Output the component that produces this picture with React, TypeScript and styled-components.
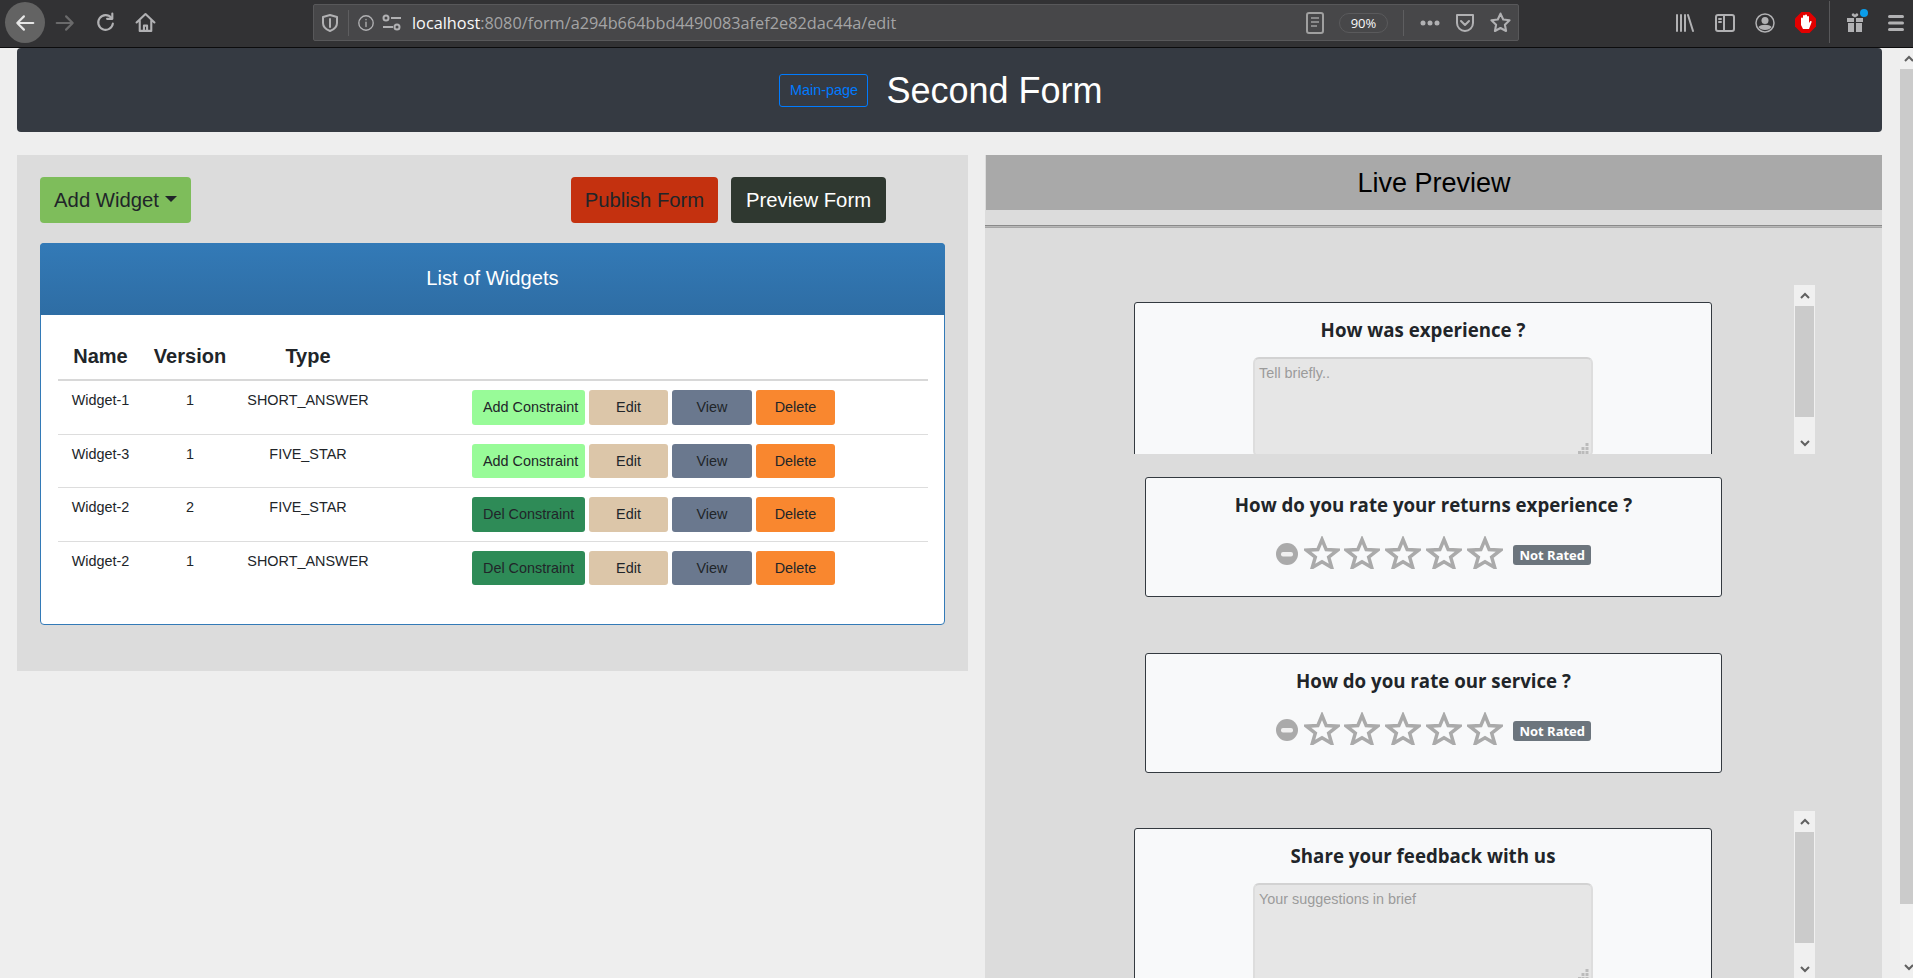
import React from "react";
import styled, { createGlobalStyle } from "styled-components";

const GlobalStyle = createGlobalStyle`
  html, body {
    margin: 0;
    padding: 0;
    height: 100%;
    overflow: hidden;
    background: #eeeeee;
    font-family: "Liberation Sans", Arial, sans-serif;
    color: #212529;
  }
  * {
    box-sizing: border-box;
  }
`;

const Shell = styled.div`
  width: 1913px;
  height: 978px;
  overflow: hidden;
  display: flex;
  flex-direction: column;
`;

/* browser chrome */
const BrowserBar = styled.header`
  flex: none;
  height: 48px;
  background: #323234;
  border-bottom: 1px solid #0c0c0d;
  display: flex;
  align-items: flex-start;
  padding-left: 5px;
`;

const NavButton = styled.div<{ $active?: boolean }>`
  flex: none;
  width: 40px;
  height: 41px;
  margin-top: 2px;
  border-radius: 50%;
  display: flex;
  align-items: center;
  justify-content: center;
  background: ${(p) => (p.$active ? "#636363" : "transparent")};
`;

const UrlBar = styled.div`
  flex: none;
  width: 1206px;
  height: 37px;
  margin: 4px 0 0 148px;
  background: #474749;
  border: 1px solid #58585a;
  border-radius: 2px;
  display: flex;
  align-items: center;
  padding: 0 7px 0 6px;
`;

const UrlDivider = styled.span<{ $left: number; $right: number }>`
  width: 1px;
  height: 26px;
  background: #5e5e60;
  margin: 0 ${(p) => p.$right}px 0 ${(p) => p.$left}px;
`;

const UrlText = styled.div`
  margin-left: 10px;
  font-family: "Open Sans", sans-serif;
  font-size: 16.3px;
  color: #a4a4a5;
  white-space: nowrap;
`;

const UrlHost = styled.span`
  color: #f9f9fa;
`;

const UrlTools = styled.div`
  margin-left: auto;
  display: flex;
  align-items: center;
`;

const ZoomPill = styled.div`
  width: 49px;
  height: 20px;
  margin: 0 15px 0 15px;
  border: 1px solid #5a5a5c;
  border-radius: 10px;
  font-family: "Open Sans", sans-serif;
  font-size: 13px;
  line-height: 18px;
  text-align: center;
  color: #f9f9fa;
`;

const ToolRow = styled.div`
  flex: none;
  display: flex;
  align-items: flex-start;
  margin-left: 146px;
`;

const ToolButton = styled.div`
  width: 40px;
  height: 41px;
  margin-top: 2px;
  display: flex;
  align-items: center;
  justify-content: center;
`;

const ToolDivider = styled.span`
  width: 1px;
  height: 42px;
  margin: 1px 6px 0 4px;
  background: #58585a;
`;

/* page */
const Viewport = styled.div`
  flex: 1;
  display: flex;
  min-height: 0;
`;

const Page = styled.main`
  flex: none;
  width: 1900px;
  padding: 0 18px 0 17px;
  overflow: hidden;
`;

const NavBar = styled.nav`
  height: 84px;
  background: #353a42;
  border-radius: 4px;
  display: flex;
  align-items: center;
  justify-content: center;
  gap: 18px;
  padding-right: 17px;
`;

const MainLink = styled.a`
  width: 89px;
  height: 33px;
  border: 1px solid #007bff;
  border-radius: 3px;
  color: #007bff;
  font-size: 14.4px;
  line-height: 31px;
  text-align: center;
`;

const PageTitle = styled.h1`
  margin: 2px 0 0;
  font-size: 36px;
  font-weight: 400;
  color: #ffffff;
`;

const Columns = styled.div`
  margin-top: 23px;
  display: flex;
  align-items: flex-start;
  gap: 17px;
`;

const LeftPanel = styled.section`
  width: 951px;
  height: 516px;
  background: #dcdcdc;
  padding: 22px 23px;
`;

const ActionRow = styled.div`
  display: flex;
  gap: 13px;
`;

const BigButton = styled.button<{ $bg: string; $fg: string; $width: number; $push?: number }>`
  width: ${(p) => p.$width}px;
  height: 46px;
  padding: 0;
  border: 0;
  border-radius: 4px;
  background: ${(p) => p.$bg};
  color: ${(p) => p.$fg};
  font-family: inherit;
  font-size: 20.3px;
  margin-left: ${(p) => p.$push ?? 0}px;
  display: flex;
  align-items: center;
  justify-content: center;
  white-space: nowrap;
`;

const Caret = styled.span`
  width: 0;
  height: 0;
  margin-left: 6px;
  margin-bottom: 3px;
  border-top: 6px solid #212529;
  border-left: 6px solid transparent;
  border-right: 6px solid transparent;
`;

const WidgetCard = styled.div`
  margin-top: 20px;
  width: 905px;
  height: 382px;
  background: #ffffff;
  border: 1px solid #337ab7;
  border-radius: 4px;
`;

const WidgetHeader = styled.div`
  height: 72px;
  margin: -1px -1px 0;
  border-radius: 4px 4px 0 0;
  background: linear-gradient(#337ab7, #2e6da4);
  color: #ffffff;
  font-size: 20.2px;
  line-height: 70px;
  text-align: center;
`;

const WidgetTable = styled.div`
  margin: 0 16px 0 17px;
`;

const HeadRow = styled.div`
  display: grid;
  grid-template-columns: 85px 94px 142px 1fr;
  height: 66px;
  padding-top: 29px;
  border-bottom: 2px solid #d8d8d8;
  font-size: 20px;
  font-weight: 700;
  line-height: 24px;
  text-align: center;
`;

const BodyRow = styled.div`
  display: grid;
  grid-template-columns: 85px 94px 142px 1fr;
  height: 53.5px;
  border-bottom: 1px solid #dddddd;
  font-size: 14.4px;
  line-height: 21.6px;
  text-align: center;
  &:last-child {
    border-bottom: 0;
  }
`;

const Cell = styled.div`
  padding-top: 9px;
`;

const RowActions = styled.div`
  padding: 9px 0 0 93px;
  display: flex;
  gap: 4px;
`;

const tones = {
  add: "#98fb98",
  del: "#2e8b57",
  edit: "#dcc6a9",
  view: "#6a788e",
  remove: "#f9872f",
};

const RowButton = styled.button<{ $tone: keyof typeof tones; $width: number }>`
  width: ${(p) => p.$width}px;
  height: 34.6px;
  padding: 0 0 0 ${(p) => (p.$width > 100 ? 11 : 0)}px;
  border: 0;
  border-radius: 3px;
  background: ${(p) => tones[p.$tone]};
  color: #212529;
  font-family: inherit;
  font-size: 14.4px;
  text-align: ${(p) => (p.$width > 100 ? "left" : "center")};
  white-space: nowrap;
`;

const RightPanel = styled.section`
  width: 897px;
  height: 840px;
  background: #dcdcdc;
  padding-left: 1px;
`;

const PreviewHeader = styled.div`
  height: 55px;
  padding-top: 1px;
  background: #a9a9a9;
  color: #000000;
  font-size: 27px;
  line-height: 55px;
  text-align: center;
`;

const PreviewRule = styled.hr`
  height: 3px;
  margin: 15px 0 0 -1px;
  border: 0;
  border-top: 1px solid #8a8a8a;
  border-bottom: 1px solid #a6a6a6;
  background: #b8b8b8;
`;

const ScrollFrame = styled.div<{ $top: number }>`
  margin: ${(p) => p.$top}px 0 0 148px;
  width: 681px;
  height: 169px;
  display: flex;
  justify-content: space-between;
  overflow: hidden;
`;

const FormCard = styled.div`
  flex: none;
  width: 578px;
  margin-top: 17px;
  height: 240px;
  padding-top: 15px;
  background: #f8f9fa;
  border: 1px solid #343a40;
  border-radius: 3px;
  text-align: center;
`;

const RatingCard = styled.div<{ $top: number }>`
  width: 577px;
  height: 120px;
  margin: ${(p) => p.$top}px 0 0 159px;
  padding-top: 15px;
  background: #f8f9fa;
  border: 1px solid #343a40;
  border-radius: 3px;
  text-align: center;
`;

const Question = styled.h3`
  margin: 0;
  font-family: "Open Sans", sans-serif;
  font-size: 18.7px;
  font-weight: 700;
  line-height: 24px;
  color: #212529;
`;

const AnswerWrap = styled.div`
  position: relative;
  width: 340px;
  margin: 15px auto 0;
`;

const Answer = styled.textarea`
  display: block;
  width: 340px;
  height: 100px;
  padding: 6px 4px;
  resize: none;
  border: 2px solid #dddddd;
  border-top-color: #d2d2d2;
  border-radius: 6px;
  background: #e6e6e6;
  font-family: "Liberation Sans", sans-serif;
  font-size: 14.4px;
  &::placeholder {
    color: #9b9b9b;
    opacity: 1;
  }
`;

const Grip = styled.svg`
  position: absolute;
  right: 4px;
  bottom: 3px;
`;

const StarRow = styled.div`
  display: flex;
  align-items: center;
  justify-content: center;
  margin-top: 19px;
`;

const ClearIcon = styled.svg`
  margin: 3px 6px 0 0;
`;

const StarIcon = styled.svg`
  margin-right: 4.7px;
`;

const Badge = styled.span`
  width: 78px;
  height: 20px;
  margin: 4px 0 0 6px;
  background: #6c757d;
  border-radius: 3px;
  color: #ffffff;
  font-family: "Open Sans", sans-serif;
  font-size: 13px;
  font-weight: 700;
  line-height: 20px;
  text-align: center;
`;

/* scrollbars */
const Track = styled.div<{ $width: number; $height: number }>`
  flex: none;
  width: ${(p) => p.$width}px;
  height: ${(p) => p.$height}px;
  background: #f0f0f0;
  display: flex;
  flex-direction: column;
  align-items: center;
`;

const TrackArrow = styled.div`
  flex: none;
  height: 21px;
  display: flex;
  align-items: center;
  justify-content: center;
`;

const Thumb = styled.div<{ $height: number; $inset: number }>`
  flex: none;
  align-self: stretch;
  height: ${(p) => p.$height}px;
  margin: 0 ${(p) => p.$inset}px;
  background: #cbcbcb;
`;

const TrackGap = styled.div`
  flex: 1;
`;

const Chevron = ({ down }: { down?: boolean }) => (
  <svg width="10" height="7" viewBox="0 0 10 7">
    <path
      d={down ? "M1 1l4 4 4-4" : "M1 6l4-4 4 4"}
      fill="none"
      stroke="#606060"
      strokeWidth="2"
    />
  </svg>
);

const ScrollBar = ({ width, height, thumb, inset }: { width: number; height: number; thumb: number; inset: number }) => (
  <Track $width={width} $height={height}>
    <TrackArrow>
      <Chevron />
    </TrackArrow>
    <Thumb $height={thumb} $inset={inset} />
    <TrackGap />
    <TrackArrow>
      <Chevron down />
    </TrackArrow>
  </Track>
);

/* toolbar drawings */
const stroke = "#b1b1b3";

const Glyph = ({ size = 20, color = stroke, width = 2, children }: { size?: number; color?: string; width?: number; children: React.ReactNode }) => (
  <svg width={size} height={size} viewBox="0 0 20 20" fill="none" stroke={color} strokeWidth={width} strokeLinecap="round" strokeLinejoin="round">
    {children}
  </svg>
);

const Star = () => (
  <StarIcon width="36" height="33" viewBox="0 0 36 33">
    <path
      d="M18 3.500l4.200 10.100 11.300.6-8.800 7 3 10.300-9.700-5.800-9.700 5.800 3-10.300-8.800-7 11.300-.6z"
      fill="#f8f9fa"
      stroke="#aaaaaa"
      strokeWidth="3.500"
    />
  </StarIcon>
);

const Rating = () => (
  <StarRow>
    <ClearIcon width="22" height="22" viewBox="0 0 22 22">
      <circle cx="11" cy="11" r="11" fill="#aaaaaa" />
      <rect x="5" y="9" width="12" height="4.500" rx="2" fill="#f0f0f0" />
    </ClearIcon>
    <Star />
    <Star />
    <Star />
    <Star />
    <Star />
    <Badge>Not Rated</Badge>
  </StarRow>
);

const ResizeGrip = () => (
  <Grip width="11" height="11" viewBox="0 0 11 11" fill="#bbbbbb">
    <rect x="7.500" y="0" width="3" height="3" />
    <rect x="3.500" y="4" width="3" height="3" />
    <rect x="7.500" y="4" width="3" height="3" />
    <rect x="0" y="8" width="3" height="3" />
    <rect x="3.500" y="8" width="3" height="3" />
    <rect x="7.500" y="8" width="3" height="3" />
  </Grip>
);

const rows = [
  { name: "Widget-1", version: 1, type: "SHORT_ANSWER", constrained: false },
  { name: "Widget-3", version: 1, type: "FIVE_STAR", constrained: false },
  { name: "Widget-2", version: 2, type: "FIVE_STAR", constrained: true },
  { name: "Widget-2", version: 1, type: "SHORT_ANSWER", constrained: true },
];

const App = () => {
  return (
    <Shell>
      <GlobalStyle />
      <BrowserBar>
        <NavButton $active>
          <Glyph size={22} color="#e6e6e6">
            <path d="M17.500 10H3M9 4l-6 6 6 6" />
          </Glyph>
        </NavButton>
        <NavButton>
          <Glyph size={22} color="#6a6a6b">
            <path d="M2.500 10H17M11 4l6 6-6 6" />
          </Glyph>
        </NavButton>
        <NavButton>
          <Glyph size={21}>
            <path d="M15.500 5.500A7 7 0 1 0 17 11" />
            <path d="M16.500 1.500v5h-5" />
          </Glyph>
        </NavButton>
        <NavButton>
          <Glyph size={21}>
            <path d="M1.500 10L10 2l8.500 8M4.500 8v10h11V8" />
            <path d="M8.500 18v-5h3v5" />
          </Glyph>
        </NavButton>
        <UrlBar>
          <Glyph size={20}>
            <path d="M10 2l7 2v6c0 4-3 6.500-7 8-4-1.500-7-4-7-8V4z" />
            <path d="M10 6v8" />
          </Glyph>
          <UrlDivider $left={8} $right={8} />
          <Glyph size={18} width={1.500}>
            <circle cx="10" cy="10" r="8" />
            <path d="M10 9v5M10 6v.5" />
          </Glyph>
          <svg width="20" height="18" viewBox="0 0 20 18" fill="none" stroke={stroke} strokeWidth="2" style={{ marginLeft: 7 }}>
            <circle cx="4" cy="4" r="2.500" />
            <path d="M9 4h10M1 13h10" />
            <circle cx="15" cy="13" r="2.500" />
          </svg>
          <UrlText>
            <UrlHost>localhost</UrlHost>:8080/form/a294b664bbd4490083afef2e82dac44a/edit
          </UrlText>
          <UrlTools>
            <svg width="18" height="22" viewBox="0 0 18 22" fill="none" stroke="#a0a0a0" strokeWidth="2">
              <rect x="1" y="1" width="16" height="20" rx="2" />
              <path d="M5 6h8M5 10h8M5 14h6" strokeWidth="1.500" />
            </svg>
            <ZoomPill>90%</ZoomPill>
            <UrlDivider $left={0} $right={16} />
            <svg width="20" height="6" viewBox="0 0 20 6" fill={stroke}>
              <circle cx="3" cy="3" r="2.500" />
              <circle cx="10" cy="3" r="2.500" />
              <circle cx="17" cy="3" r="2.500" />
            </svg>
            <svg width="20" height="20" viewBox="0 0 20 20" fill="none" stroke={stroke} strokeWidth="2" strokeLinecap="round" strokeLinejoin="round" style={{ marginLeft: 15 }}>
              <path d="M2 2h16v8a8 8 0 0 1-16 0z" />
              <path d="M6 8l4 4 4-4" />
            </svg>
            <svg width="21" height="21" viewBox="0 0 20 20" fill="none" stroke={stroke} strokeWidth="2" strokeLinejoin="round" style={{ marginLeft: 15 }}>
              <path d="M10 1.500l2.600 5.600 6 .8-4.400 4.200 1.100 6L10 15.200l-5.300 2.900 1.100-6L1.400 7.900l6-.8z" />
            </svg>
          </UrlTools>
        </UrlBar>
        <ToolRow>
          <ToolButton>
            <Glyph size={20}>
              <path d="M2 2v16M6 2v16M10 2v16M13 2l5 16" />
            </Glyph>
          </ToolButton>
          <ToolButton>
            <Glyph size={20}>
              <rect x="1" y="2" width="18" height="16" rx="2" />
              <path d="M9 2v16M4 6h2M4 9h2" />
            </Glyph>
          </ToolButton>
          <ToolButton>
            <svg width="20" height="20" viewBox="0 0 20 20" fill={stroke}>
              <circle cx="10" cy="10" r="9" fill="none" stroke={stroke} strokeWidth="1.500" />
              <circle cx="10" cy="7.500" r="3.500" />
              <path d="M3.500 14c2-3 11-3 13 0-2 4-11 4-13 0z" />
            </svg>
          </ToolButton>
          <ToolButton>
            <svg width="21" height="21" viewBox="0 0 21 21">
              <path d="M6.500 0h8L21 6.500v8L14.500 21h-8L0 14.500v-8z" fill="#e20000" />
              <path d="M6 10V6.500a1 1 0 0 1 2 0V4a1 1 0 0 1 2 0V3.500a1 1 0 0 1 2 0V5a1 1 0 0 1 2 0v6l1-1.500c1-1 2 0 1.500 1L14 17H8l-2-4z" fill="#ffffff" />
            </svg>
          </ToolButton>
          <ToolDivider />
          <ToolButton>
            <svg width="26" height="28" viewBox="0 0 26 28" fill={stroke}>
              <path d="M4 9h7v4H4zM13 9h7v4h-7zM5 14h6v9H5zM13 14h6v9h-6z" />
              <path d="M12 8.500c-2-1-4-2-3-3.500s2.500-.5 3 1c.5-1.500 2-2.500 3-1s-1 2.500-3 3.500z" />
              <circle cx="21" cy="4" r="4" fill="#0a9dea" />
            </svg>
          </ToolButton>
          <ToolButton>
            <svg width="18" height="16" viewBox="0 0 18 16" fill={stroke}>
              <rect x="1" y="0" width="16" height="3" rx="1.500" />
              <rect x="1" y="6.500" width="16" height="3" rx="1.500" />
              <rect x="1" y="13" width="16" height="3" rx="1.500" />
            </svg>
          </ToolButton>
        </ToolRow>
      </BrowserBar>
      <Viewport>
        <Page>
          <NavBar>
            <MainLink>Main-page</MainLink>
            <PageTitle>Second Form</PageTitle>
          </NavBar>
          <Columns>
            <LeftPanel>
              <ActionRow>
                <BigButton $bg="#7ebd5b" $fg="#212529" $width={151}>
                  Add Widget
                  <Caret />
                </BigButton>
                <BigButton $bg="#c4310f" $fg="#212529" $width={147} $push={367}>
                  Publish Form
                </BigButton>
                <BigButton $bg="#2f3830" $fg="#ffffff" $width={155}>
                  Preview Form
                </BigButton>
              </ActionRow>
              <WidgetCard>
                <WidgetHeader>List of Widgets</WidgetHeader>
                <WidgetTable>
                  <HeadRow>
                    <div>Name</div>
                    <div>Version</div>
                    <div>Type</div>
                    <div />
                  </HeadRow>
                  {rows.map((row, i) => (
                    <BodyRow key={i}>
                      <Cell>{row.name}</Cell>
                      <Cell>{row.version}</Cell>
                      <Cell>{row.type}</Cell>
                      <RowActions>
                        <RowButton $tone={row.constrained ? "del" : "add"} $width={113}>
                          {row.constrained ? "Del Constraint" : "Add Constraint"}
                        </RowButton>
                        <RowButton $tone="edit" $width={79}>Edit</RowButton>
                        <RowButton $tone="view" $width={80}>View</RowButton>
                        <RowButton $tone="remove" $width={79}>Delete</RowButton>
                      </RowActions>
                    </BodyRow>
                  ))}
                </WidgetTable>
              </WidgetCard>
            </LeftPanel>
            <RightPanel>
              <PreviewHeader>Live Preview</PreviewHeader>
              <PreviewRule />
              <ScrollFrame $top={57}>
                <FormCard>
                  <Question>How was experience ?</Question>
                  <AnswerWrap>
                    <Answer placeholder="Tell briefly.." />
                    <ResizeGrip />
                  </AnswerWrap>
                </FormCard>
                <ScrollBar width={21} height={169} thumb={111} inset={1} />
              </ScrollFrame>
              <RatingCard $top={23}>
                <Question>How do you rate your returns experience ?</Question>
                <Rating />
              </RatingCard>
              <RatingCard $top={56}>
                <Question>How do you rate our service ?</Question>
                <Rating />
              </RatingCard>
              <ScrollFrame $top={38}>
                <FormCard>
                  <Question>Share your feedback with us</Question>
                  <AnswerWrap>
                    <Answer placeholder="Your suggestions in brief" />
                    <ResizeGrip />
                  </AnswerWrap>
                </FormCard>
                <ScrollBar width={21} height={169} thumb={111} inset={1} />
              </ScrollFrame>
            </RightPanel>
          </Columns>
        </Page>
        <ScrollBar width={17} height={930} thumb={835} inset={0} />
      </Viewport>
    </Shell>
  );
};

export default App;
